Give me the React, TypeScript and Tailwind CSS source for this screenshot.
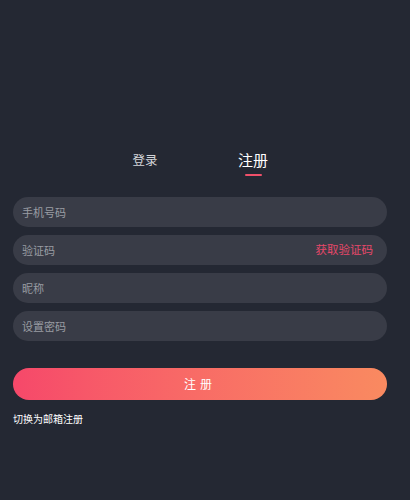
import React, { useState } from 'react';

const font = { fontFamily: '"Noto Sans CJK SC", "Noto Sans", sans-serif' };

const fields = ['手机号码', '验证码', '昵称', '设置密码'];

export default function App() {
  const [tab, setTab] = useState<'login' | 'register'>('register');

  return (
    <div className="w-[410px] h-[500px] bg-[#242833] overflow-hidden" style={font}>
      <div className="flex pl-[120px] gap-[58px] pt-[150px]">
        <button
          className="w-[50px] flex flex-col items-center"
          onClick={() => setTab('login')}
        >
          <span className={`h-[20px] leading-[20px] ${tab === 'login' ? 'text-[15px] text-white' : 'text-[12.5px] text-[#d4d6da]'}`}>登录</span>
          <span className={`mt-[4px] h-[2px] w-[17px] rounded-full ${tab === 'login' ? 'bg-[#f0506a]' : 'bg-transparent'}`} />
        </button>
        <button
          className="w-[50px] flex flex-col items-center"
          onClick={() => setTab('register')}
        >
          <span className={`h-[20px] leading-[20px] ${tab === 'register' ? 'text-[15px] text-white' : 'text-[12.5px] text-[#d4d6da]'}`}>注册</span>
          <span className={`mt-[4px] h-[2px] w-[17px] rounded-full ${tab === 'register' ? 'bg-[#f0506a]' : 'bg-transparent'}`} />
        </button>
      </div>

      <div className="px-[13px] mt-[21px] w-[400px]">
        <div className="flex flex-col gap-[8px]">
          {fields.map((f, i) => (
            <div key={f} className="h-[30px] rounded-full bg-[#393c47] flex items-center pl-[9px] pr-[14px]">
              <input
                placeholder={f}
                className="flex-1 bg-transparent outline-none text-[11px] text-white placeholder:text-[#9a9ca3]"
                style={font}
              />
              {i === 1 && <span className="text-[11.5px] text-[#e8486a]">获取验证码</span>}
            </div>
          ))}
        </div>

        <button className="mt-[27px] w-full h-[32px] rounded-full bg-gradient-to-r from-[#f6486a] to-[#f98a60] text-white text-[12px] tracking-[4px]">
          注册
        </button>

        <div className="mt-[12px] text-[10px] leading-[14px] text-white">切换为邮箱注册</div>
      </div>
    </div>
  );
}
